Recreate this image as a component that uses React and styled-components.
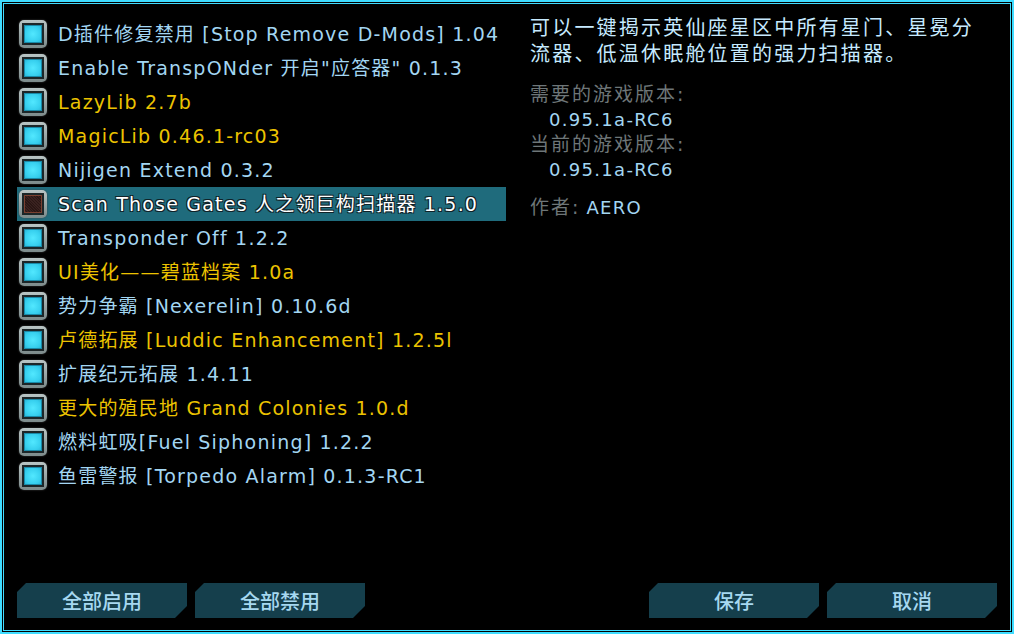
import React from 'react';
import styled, { createGlobalStyle } from 'styled-components';

const GlobalStyle = createGlobalStyle`
  html, body {
    margin: 0;
    padding: 0;
    background: #000;
  }
  body {
    font-family: "DejaVu Sans", "Noto Sans CJK SC", sans-serif;
  }
`;

const Frame = styled.div`
  box-sizing: border-box;
  width: 1014px;
  height: 634px;
  border: 2px solid #3fdcff;
  padding: 1px;
  background: #000;
`;

const Inner = styled.div`
  box-sizing: border-box;
  height: 100%;
  border: 1px solid #3fdcff;
  display: flex;
  flex-direction: column;
  padding: 13px 13px 12px 13px;
`;

const Body = styled.div`
  flex: 1;
  display: flex;
  gap: 24px;
`;

const ModList = styled.ul`
  list-style: none;
  margin: 0;
  padding: 0;
  width: 489px;
  display: flex;
  flex-direction: column;
`;

const Row = styled.li`
  height: 34px;
  display: flex;
  align-items: center;
  gap: 11px;
  padding-left: 2px;
  background: ${(p) => (p.selected ? '#1f6b7c' : 'transparent')};
`;

const Label = styled.span`
  font-size: 19px;
  line-height: 32px;
  letter-spacing: 1.2px;
  white-space: nowrap;
  color: ${(p) => (p.selected ? '#fff' : p.core ? '#ecc300' : '#a3d6f2')};
  text-shadow: ${(p) =>
    p.selected
      ? '-1px -1px 0 #102228, 1px -1px 0 #102228, -1px 1px 0 #102228, 1px 1px 0 #102228'
      : 'none'};
`;

const Box = styled.span`
  box-sizing: border-box;
  width: 28px;
  height: 28px;
  flex: none;
  border-radius: 5px;
  background: linear-gradient(#b8c4c4, #7c8a8a);
  padding: 3px;
  box-shadow: 0 0 2px #444;
`;

const BoxWell = styled.span`
  box-sizing: border-box;
  display: block;
  width: 100%;
  height: 100%;
  background: #1c2628;
  padding: 2px;
`;

const BoxFill = styled.span`
  box-sizing: border-box;
  display: block;
  width: 100%;
  height: 100%;
  border: 1px solid ${(p) => (p.on ? '#1a8aa8' : '#7a4030')};
  background: ${(p) =>
    p.on
      ? 'radial-gradient(circle, #52e8ff 0%, #36cfee 70%, #2bb8d8 100%)'
      : 'repeating-linear-gradient(45deg, #3a2220 0 1px, #2a1614 1px 2px)'};
`;

const Details = styled.div`
  flex: 1;
  display: flex;
  flex-direction: column;
`;

const Description = styled.p`
  margin: -2px 0 15px 0;
  width: 460px;
  font-size: 20px;
  letter-spacing: 2.2px;
  line-height: 26px;
  color: #c6eaff;
`;

const Caption = styled.div`
  font-size: 19px;
  letter-spacing: 2px;
  line-height: 25px;
  color: #6e7678;
`;

const Value = styled.div`
  font-size: 18px;
  letter-spacing: 1.3px;
  line-height: 25px;
  color: #a3d6f2;
  padding-left: ${(p) => (p.indent ? '19px' : '0')};
`;

const Author = styled.div`
  margin-top: 13px;
  display: flex;
  gap: 6px;
  align-items: baseline;
`;

const Footer = styled.div`
  display: flex;
  justify-content: space-between;
  height: 35px;
`;

const Group = styled.div`
  display: flex;
  gap: 8px;
`;

const Button = styled.button`
  width: 170px;
  height: 35px;
  border: none;
  padding: 0;
  background: #153f4c;
  clip-path: polygon(9px 0, 100% 0, 100% calc(100% - 12px), calc(100% - 12px) 100%, 0 100%, 0 9px);
  color: #a6d8f0;
  font-family: "Noto Sans CJK SC", sans-serif;
  font-size: 20px;
  font-weight: 500;
  cursor: pointer;
`;

const mods = [
  { name: 'D插件修复禁用 [Stop Remove D-Mods] 1.04' },
  { name: 'Enable TranspONder 开启"应答器" 0.1.3' },
  { name: 'LazyLib 2.7b', core: true },
  { name: 'MagicLib 0.46.1-rc03', core: true },
  { name: 'Nijigen Extend 0.3.2' },
  { name: 'Scan Those Gates 人之领巨构扫描器 1.5.0', selected: true, off: true },
  { name: 'Transponder Off 1.2.2' },
  { name: 'UI美化——碧蓝档案 1.0a', core: true },
  { name: '势力争霸 [Nexerelin] 0.10.6d' },
  { name: '卢德拓展 [Luddic Enhancement] 1.2.5l', core: true },
  { name: '扩展纪元拓展 1.4.11' },
  { name: '更大的殖民地 Grand Colonies 1.0.d', core: true },
  { name: '燃料虹吸[Fuel Siphoning] 1.2.2' },
  { name: '鱼雷警报 [Torpedo Alarm] 0.1.3-RC1' },
];

function Checkbox({ on }) {
  return (
    <Box>
      <BoxWell>
        <BoxFill on={on} />
      </BoxWell>
    </Box>
  );
}

export default function App() {
  return (
    <>
      <GlobalStyle />
      <Frame>
        <Inner>
          <Body>
            <ModList>
              {mods.map((m) => (
                <Row key={m.name} selected={m.selected}>
                  <Checkbox on={!m.off} />
                  <Label core={m.core} selected={m.selected}>
                    {m.name}
                  </Label>
                </Row>
              ))}
            </ModList>
            <Details>
              <Description>
                可以一键揭示英仙座星区中所有星门、星冕分流器、低温休眠舱位置的强力扫描器。
              </Description>
              <Caption>需要的游戏版本:</Caption>
              <Value indent>0.95.1a-RC6</Value>
              <Caption>当前的游戏版本:</Caption>
              <Value indent>0.95.1a-RC6</Value>
              <Author>
                <Caption>作者:</Caption>
                <Value>AERO</Value>
              </Author>
            </Details>
          </Body>
          <Footer>
            <Group>
              <Button>全部启用</Button>
              <Button>全部禁用</Button>
            </Group>
            <Group>
              <Button>保存</Button>
              <Button>取消</Button>
            </Group>
          </Footer>
        </Inner>
      </Frame>
    </>
  );
}
